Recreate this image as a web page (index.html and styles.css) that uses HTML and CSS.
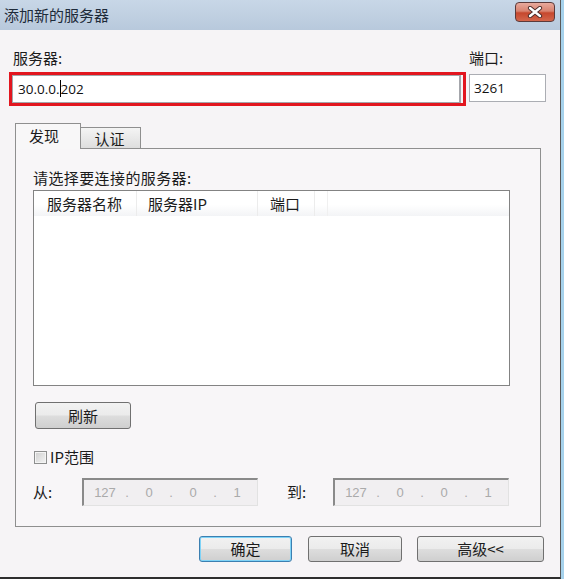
FILE: index.html
```html
<!DOCTYPE html>
<html lang="zh-CN">
<head>
<meta charset="UTF-8">
<title>添加新的服务器</title>
<link rel="stylesheet" href="styles.css">
</head>
<body>
<div class="window">
    <div class="titlebar">
        <span class="title">添加新的服务器</span>
        <span class="close">
            <svg width="16" height="12" viewBox="0 0 16 12">
                <path d="M3 2 L13 10 M13 2 L3 10" stroke="#4a2a28" stroke-width="4.2" stroke-linecap="round"/>
                <path d="M3 2 L13 10 M13 2 L3 10" stroke="#ffffff" stroke-width="2.4" stroke-linecap="round"/>
            </svg>
        </span>
    </div>

    <div class="body">
        <!-- Server address and port -->
        <div class="server-row">
            <div class="field server-field">
                <div class="label">服务器:</div>
                <div class="highlight">
                    <div class="textbox">30.0.0.<span class="caret"></span>202</div>
                </div>
            </div>
            <div class="field port-field">
                <div class="label">端口:</div>
                <div class="textbox port-box">3261</div>
            </div>
        </div>

        <!-- Tabs -->
        <div class="tabs">
            <div class="tab active">发现</div>
            <div class="tab">认证</div>
        </div>

        <div class="panel">
            <div class="prompt">请选择要连接的服务器:</div>
            <div class="listbox">
                <div class="list-header">
                    <div class="col col-name">服务器名称</div>
                    <div class="col col-ip">服务器IP</div>
                    <div class="col col-port">端口</div>
                    <div class="col col-rest"></div>
                </div>
            </div>

            <button class="btn refresh">刷新</button>

            <div class="check-row">
                <span class="checkbox"></span>
                <span class="check-label">IP范围</span>
            </div>

            <div class="range-row">
                <span class="range-label from">从:</span>
                <div class="ipbox">
                    <span class="octet">127</span><span class="dot">.</span>
                    <span class="octet">0</span><span class="dot">.</span>
                    <span class="octet">0</span><span class="dot">.</span>
                    <span class="octet">1</span>
                </div>
                <span class="range-label to">到:</span>
                <div class="ipbox">
                    <span class="octet">127</span><span class="dot">.</span>
                    <span class="octet">0</span><span class="dot">.</span>
                    <span class="octet">0</span><span class="dot">.</span>
                    <span class="octet">1</span>
                </div>
            </div>
        </div>

        <!-- Dialog buttons -->
        <div class="actions">
            <button class="btn ok">确定</button>
            <button class="btn cancel">取消</button>
            <button class="btn advanced">高级&lt;&lt;</button>
        </div>
    </div>
</div>
</body>
</html>
```

FILE: styles.css
```css
/* Add new server dialog */
body {
    margin: 0;
    background: #ffffff;
    font-family: "Noto Sans CJK SC", sans-serif;
    font-size: 15px;
    color: #1b1b1b;
}

.window {
    width: 560px;
    height: 577px;
    background: #f6f4f6;
    border-right: 1px solid #5a5a5a;
    border-bottom: 2px solid #2e2e2e;
    box-shadow: 3px 0 0 #a6d2ec;
    box-sizing: content-box;
}

.titlebar {
    height: 30px;
    display: flex;
    align-items: center;
    justify-content: space-between;
    padding: 0 5px 0 4px;
    background: linear-gradient(#c8d7e7, #b8c9dc);
}

.title {
    font-size: 15px;
    color: #1e2b3a;
    line-height: 18px;
}

.close {
    width: 40px;
    height: 20px;
    box-sizing: border-box;
    margin-top: -6px;
    border: 1px solid #5b3a3a;
    border-radius: 4px;
    background: linear-gradient(#e8aa9d 0%, #d88370 45%, #c6472d 55%, #d3664c 100%);
    display: flex;
    align-items: center;
    justify-content: center;
}

.body {
    padding: 19px 0 0 9px;
}

.label {
    line-height: 18px;
    height: 18px;
}

.server-row {
    display: flex;
}

.server-field .label {
    margin-left: 4px;
}

.highlight {
    margin-top: 5px;
    width: 457px;
    height: 34px;
    box-sizing: border-box;
    border: 3px solid #e2161f;
    padding: 0 2px 0 0;
}

.textbox {
    height: 28px;
    box-sizing: border-box;
    border: 1px solid #a4a6ab;
    border-right-width: 2px;
    background: #ffffff;
    font-family: "Open Sans", "Liberation Sans", sans-serif;
    font-size: 13.5px;
    line-height: 26px;
    padding-left: 5px;
    color: #111;
}

.caret {
    display: inline-block;
    width: 1px;
    height: 17px;
    background: #000;
    vertical-align: -3px;
}

.port-field {
    margin-left: 3px;
}

.port-box {
    margin-top: 7px;
    width: 77px;
    border: 1px solid #abadb3;
    padding-left: 4px;
}

.tabs {
    display: flex;
    align-items: flex-end;
    margin: 17px 0 0 6px;
    height: 25px;
}

.tab {
    height: 21px;
    width: 60px;
    box-sizing: border-box;
    border: 1px solid #8f8f8f;
    border-bottom: none;
    border-left: none;
    background: linear-gradient(#f4f4f4, #dedede);
    text-align: center;
    line-height: 22px;
    padding-right: 2px;
}

.tab.active {
    position: relative;
    height: 26px;
    width: 66px;
    margin-bottom: -1px;
    border-left: 1px solid #8f8f8f;
    background: #f8f7f8;
    line-height: 24px;
    padding-right: 8px;
}

.panel {
    margin-left: 6px;
    width: 526px;
    height: 379px;
    box-sizing: border-box;
    border: 1px solid #8f8f8f;
    background: #f8f6f8;
    padding: 20px 0 0 17px;
}

.prompt {
    line-height: 18px;
    letter-spacing: 0.4px;
}

.listbox {
    margin-top: 3px;
    width: 477px;
    height: 196px;
    box-sizing: border-box;
    border: 1px solid #838383;
    background: #ffffff;
}

.list-header {
    display: flex;
    height: 25px;
    background: linear-gradient(#ffffff 0%, #ffffff 55%, #f3f4f6 100%);
}

.col {
    box-sizing: border-box;
    padding-left: 12px;
    line-height: 26px;
    border-right: 1px solid #ececec;
}

.col-name { width: 103px; padding-left: 13px; }
.col-ip { width: 121px; padding-left: 11px; }
.col-port { width: 57px; }
.col-rest { width: 13px; border-right-color: #f0f0f0; }

.btn {
    height: 26px;
    box-sizing: border-box;
    border: 1px solid #707070;
    border-radius: 3px;
    background: linear-gradient(#f2f2f2 0%, #ebebeb 48%, #dddddd 52%, #cfcfcf 100%);
    font-family: "Noto Sans CJK SC", sans-serif;
    font-size: 15px;
    color: #1b1b1b;
    padding: 0;
    line-height: 22px;
}

.refresh {
    display: block;
    margin: 16px 0 0 2px;
    width: 96px;
    height: 27px;
}

.check-row {
    display: flex;
    align-items: center;
    margin-top: 19px;
    margin-left: 1px;
    height: 18px;
}

.checkbox {
    width: 13px;
    height: 13px;
    box-sizing: border-box;
    border: 1px solid #8e8f8f;
    background: linear-gradient(135deg, #cfcfcf, #f4f4f4);
    box-shadow: inset 0 0 0 1px #f4f4f4;
    margin-right: 3px;
}

.check-label {
    line-height: 18px;
}

.range-row {
    display: flex;
    align-items: center;
    margin-top: 12px;
}

.range-label {
    line-height: 18px;
}

.from { width: 49px; }
.to { width: 46px; margin-left: 29px; }

.ipbox {
    width: 176px;
    height: 28px;
    box-sizing: border-box;
    border-top: 2px solid #8a8a8a;
    border-left: 2px solid #8a8a8a;
    border-right: 1px solid #e2e2e2;
    border-bottom: 1px solid #e2e2e2;
    background: #f1eff1;
    display: flex;
    align-items: center;
    padding-left: 4px;
    font-family: "Liberation Sans", sans-serif;
    font-size: 13px;
    color: #aaaaaa;
}

.octet {
    width: 34px;
    text-align: center;
}

.dot {
    width: 10px;
    text-align: center;
}

.actions {
    display: flex;
    justify-content: flex-end;
    margin-top: 9px;
    padding-right: 16px;
}

.ok {
    width: 93px;
    border-color: #3c7fb1;
    box-shadow: inset 0 0 0 1px #7fd3f7;
}

.cancel {
    width: 94px;
    margin-left: 16px;
}

.advanced {
    width: 127px;
    margin-left: 15px;
}
```
